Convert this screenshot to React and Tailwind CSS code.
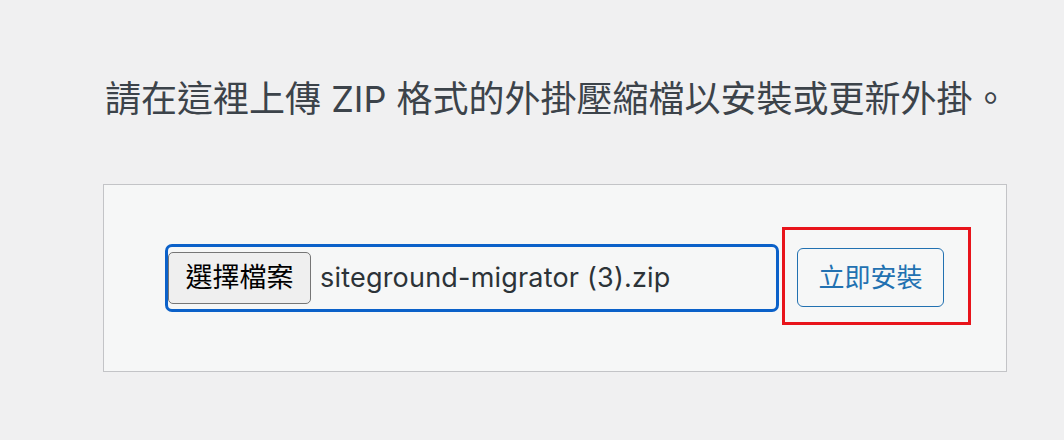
import React from 'react';

const cjk = '"Inter", "Noto Sans CJK TC", "Noto Sans", sans-serif';

export default function App() {
  return (
    <div
      className="min-h-[440px] w-[1064px] bg-[#f0f0f1] pl-[103px] pt-[74px] text-[#3c434a]"
      style={{ fontFamily: cjk }}
    >
      {/* 說明文字 */}
      <p className="ml-[2px] text-[36px] leading-[50px] text-[#3c434a]">
        請在這裡上傳 ZIP 格式的外掛壓縮檔以安裝或更新外掛。
      </p>

      {/* 上傳表單 */}
      <div className="mt-[60px] flex h-[188px] w-[904px] items-center border border-[#c3c4c7] bg-[#f6f7f7] pl-[61px]">
        <div className="flex h-[68px] w-[614px] items-center rounded-[7px] border-[3px] border-[#0b61c9] bg-[#f6f7f7]">
          <span className="flex h-[52px] w-[143px] items-center justify-center rounded-[5px] border border-[#767676] bg-[#efefef] text-[27px] text-black">
            選擇檔案
          </span>
          <span className="ml-[9px] text-[27px] tracking-[0.2px] text-[#2c3338]">siteground-migrator (3).zip</span>
        </div>

        <div className="ml-[3px] -mt-[4px] border-[3px] border-[#e8141b] pb-[15px] pl-[12px] pr-[24px] pt-[18px]">
          <button className="flex h-[59px] w-[147px] items-center justify-center rounded-[6px] border border-[#2271b1] bg-[#f6f7f7] text-[26px] text-[#2271b1]">
            立即安裝
          </button>
        </div>
      </div>
    </div>
  );
}
